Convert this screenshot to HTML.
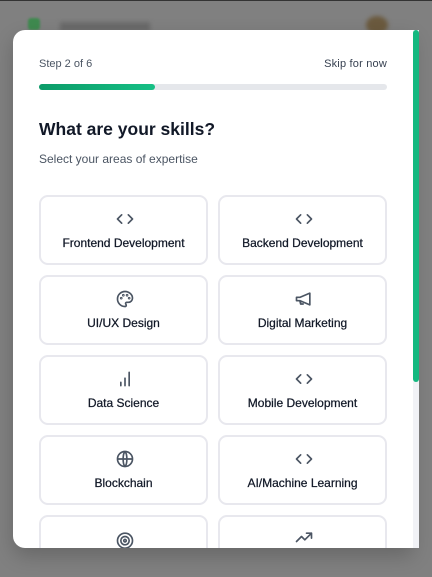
<!DOCTYPE html>
<html><head><style>
*{margin:0;padding:0;box-sizing:border-box}
body{width:432px;height:577px;background:#808080;font-family:"Liberation Sans","DejaVu Sans",sans-serif;position:relative;overflow:hidden}
.topline{position:absolute;left:0;top:0;width:432px;height:1px;background:#333}
.modal{position:absolute;left:13px;top:30px;width:400px;height:518px;background:#fff;border-radius:12px 0 0 12px;overflow:hidden;box-shadow:0 8px 20px rgba(0,0,0,.2)}
.track{position:absolute;left:413px;top:30px;width:6px;height:518px;background:#f1f2f6}
.thumb{position:absolute;left:413px;top:30px;width:6px;height:352px;background:#14b87f;border-radius:3px}
.step{position:absolute;left:26px;top:28px;font-size:11px;color:#4b5563}
.skip{position:absolute;right:26px;top:28px;font-size:11px;color:#374151;letter-spacing:.2px}
.bar{position:absolute;left:26px;top:54px;width:348px;height:6px;border-radius:3px;background:#e5e7eb}
.bar i{display:block;width:116px;height:6px;border-radius:3px;background:linear-gradient(90deg,#0b9b68,#16bf85)}
h1{position:absolute;left:26px;top:89px;font-size:17.5px;font-weight:bold;color:#111827}
.sub{position:absolute;left:26px;top:122px;font-size:12px;color:#4b5563}
.card{position:absolute;width:169px;height:70px;border:2px solid #e8e8ee;border-radius:9px;text-align:center}
.card svg{position:absolute;left:74px;top:12px}
.card span{position:absolute;left:0;right:0;top:39px;font-size:12px;color:#111827;-webkit-text-stroke:.25px #111827}
.bg1{position:absolute;left:28px;top:18px;width:12px;height:12px;background:#3f8a4f;border-radius:3px;filter:blur(1px)}
.bg2{position:absolute;left:60px;top:22px;width:90px;height:10px;background:#6a6a6a;filter:blur(2px)}
.bg3{position:absolute;left:366px;top:16px;width:22px;height:18px;background:#6b5a3e;border-radius:50%;filter:blur(2px)}
</style></head><body>
<div class="topline"></div>
<div class="bg1"></div><div class="bg2"></div><div class="bg3"></div>
<div class="modal">
<div class="step">Step 2 of 6</div>
<div class="skip">Skip for now</div>
<div class="bar"><i></i></div>
<h1>What are your skills?</h1>
<div class="sub">Select your areas of expertise</div>

<div class="card" style="left:26px;top:165px"><svg width="20" height="20" viewBox="0 0 24 24" fill="none" stroke="#4b5563" stroke-width="2" stroke-linecap="round" stroke-linejoin="round"><path d="M8 7l-5 5 5 5M16 7l5 5-5 5"/></svg><span>Frontend Development</span></div>
<div class="card" style="left:205px;top:165px"><svg width="20" height="20" viewBox="0 0 24 24" fill="none" stroke="#4b5563" stroke-width="2" stroke-linecap="round" stroke-linejoin="round"><path d="M8 7l-5 5 5 5M16 7l5 5-5 5"/></svg><span>Backend Development</span></div>

<div class="card" style="left:26px;top:245px"><svg width="20" height="20" viewBox="0 0 24 24" fill="none" stroke="#4b5563" stroke-width="2" stroke-linecap="round" stroke-linejoin="round"><path d="M12 3a9 9 0 100 18c1 0 1.5-.7 1.5-1.5 0-.4-.2-.8-.4-1.1-.3-.3-.4-.6-.4-1 0-.8.7-1.4 1.5-1.4H16a5 5 0 005-5C21 6.6 17 3 12 3z"/><circle cx="7.5" cy="11" r=".6"/><circle cx="10" cy="7.5" r=".6"/><circle cx="14.5" cy="7.5" r=".6"/><circle cx="17" cy="11" r=".6"/></svg><span>UI/UX Design</span></div>
<div class="card" style="left:205px;top:245px"><svg width="20" height="20" viewBox="0 0 24 24" fill="none" stroke="#4b5563" stroke-width="2" stroke-linecap="round" stroke-linejoin="round"><path d="M3 10v4h4l12 5V5L7 10H3zM7 14l1 4h3"/></svg><span>Digital Marketing</span></div>

<div class="card" style="left:26px;top:325px"><svg width="20" height="20" viewBox="0 0 24 24" fill="none" stroke="#4b5563" stroke-width="2" stroke-linecap="round"><path d="M7 20v-4M12 20v-9M17 20V4"/></svg><span>Data Science</span></div>
<div class="card" style="left:205px;top:325px"><svg width="20" height="20" viewBox="0 0 24 24" fill="none" stroke="#4b5563" stroke-width="2" stroke-linecap="round" stroke-linejoin="round"><path d="M8 7l-5 5 5 5M16 7l5 5-5 5"/></svg><span>Mobile Development</span></div>

<div class="card" style="left:26px;top:405px"><svg width="20" height="20" viewBox="0 0 24 24" fill="none" stroke="#4b5563" stroke-width="2"><circle cx="12" cy="12" r="9"/><path d="M3 12h18M12 3c3 3 3 15 0 18M12 3c-3 3-3 15 0 18"/></svg><span>Blockchain</span></div>
<div class="card" style="left:205px;top:405px"><svg width="20" height="20" viewBox="0 0 24 24" fill="none" stroke="#4b5563" stroke-width="2" stroke-linecap="round" stroke-linejoin="round"><path d="M8 7l-5 5 5 5M16 7l5 5-5 5"/></svg><span>AI/Machine Learning</span></div>

<div class="card" style="left:26px;top:485px"><svg width="20" height="20" viewBox="0 0 24 24" fill="none" stroke="#4b5563" stroke-width="2"><circle cx="12" cy="14" r="9"/><circle cx="12" cy="14" r="5"/><circle cx="12" cy="14" r="1.5"/></svg></div>
<div class="card" style="left:205px;top:485px"><svg width="20" height="20" viewBox="0 0 24 24" fill="none" stroke="#4b5563" stroke-width="2" stroke-linecap="round" stroke-linejoin="round"><path d="M3 15l6-6 4 4 8-8M15 5h6v6"/></svg></div>
</div>
<div class="track"></div>
<div class="thumb"></div>
</body></html>
